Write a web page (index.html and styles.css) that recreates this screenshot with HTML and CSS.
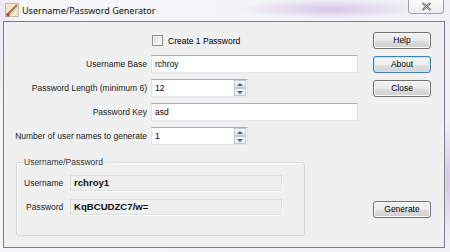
FILE: index.html
```html
<!DOCTYPE html>
<html lang="en">
<head>
    <meta charset="UTF-8">
    <title>Username/Password Generator</title>
    <link rel="stylesheet" href="styles.css">
</head>
<body>

<div class="window">
    <div class="titlebar">
        <svg class="app-icon" width="14" height="14" viewBox="0 0 14 14">
            <rect x="0.5" y="0.5" width="13" height="13" fill="#efe6d2" stroke="#c9b89a"/>
            <path d="M2 12 L12 2" stroke="#9c7a4e" stroke-width="2.2"/>
            <path d="M4.5 12.5 L12.5 4.5" stroke="#d8c7a6" stroke-width="1"/>
            <rect x="1.5" y="10.5" width="3" height="3" fill="#d0342c"/>
        </svg>
        <span class="title">Username/Password Generator</span>
        <div class="close-btn">
            <svg width="11" height="9" viewBox="0 0 11 9">
                <path d="M1.5 1 L9.5 8 M9.5 1 L1.5 8" stroke="#5a5a5a" stroke-width="2.2"/>
                <path d="M1.5 1 L9.5 8 M9.5 1 L1.5 8" stroke="#e8e8e8" stroke-width="0.8"/>
            </svg>
        </div>
    </div>

    <div class="client">
        <div class="form-col">
            <div class="check-row">
                <span class="checkbox"></span>
                <span>Create 1 Password</span>
            </div>

            <div class="fields">
                <label>Username Base</label>
                <div class="textbox">rchroy</div>

                <label>Password Length (minimum 6)</label>
                <div class="numeric">
                    <span class="num-value">12</span>
                    <span class="spin"><span class="up"></span><span class="down"></span></span>
                </div>

                <label>Password Key</label>
                <div class="textbox">asd</div>

                <label>Number of user names to generate</label>
                <div class="numeric">
                    <span class="num-value">1</span>
                    <span class="spin"><span class="up"></span><span class="down"></span></span>
                </div>
            </div>

            <fieldset class="group">
                <legend>Username/Password</legend>
                <div class="result-row">
                    <span class="result-label">Username</span>
                    <div class="result-box">rchroy1</div>
                </div>
                <div class="result-row">
                    <span class="result-label pw">Password</span>
                    <div class="result-box">KqBCUDZC7/w=</div>
                </div>
            </fieldset>
        </div>

        <div class="button-col">
            <div class="button">Help</div>
            <div class="button default">About</div>
            <div class="button">Close</div>
            <div class="button generate">Generate</div>
        </div>
    </div>
</div>

</body>
</html>
```

FILE: styles.css
```css
* {
    box-sizing: border-box;
}

body {
    margin: 0;
    font-family: "Liberation Sans", Arial, sans-serif;
    font-size: 8.5px;
    color: #000;
}

/* aero glass frame, with the blurred window behind it */
.window {
    width: 450px;
    height: 252px;
    overflow: hidden;
    background:
        radial-gradient(ellipse 90px 10px at 330px 9px, rgba(196, 160, 222, 0.55), transparent),
        radial-gradient(ellipse 6px 60px at 448px 180px, rgba(190, 150, 215, 0.5), transparent),
        linear-gradient(100deg, #ece6f2 0%, #f6f6f8 5%, #f3f4f7 50%, #eef1f6 100%);
}

.titlebar {
    height: 21px;
    display: flex;
    align-items: flex-start;
}

.app-icon {
    margin: 3px 0 0 5px;
}

.title {
    margin: 4px 0 0 3px;
    font-family: "Noto Sans", sans-serif;
    font-size: 9px;
    color: #111;
}

.close-btn {
    margin-left: auto;
    margin-right: 6px;
    width: 36px;
    height: 14px;
    border: 1px solid #9ea4ad;
    border-top: none;
    border-radius: 0 0 4px 4px;
    background: linear-gradient(#fbfbfb, #eceef1);
    display: flex;
    justify-content: center;
    align-items: center;
}

.client {
    margin-left: 3px;
    width: 442px;
    height: 227px;
    border: 1px solid #7a7f86;
    background: #f0f0f0;
    display: flex;
    padding: 10px 13px 11px 0;
}

.form-col {
    width: 354px;
    display: flex;
    flex-direction: column;
}

.check-row {
    height: 17px;
    display: flex;
    align-items: center;
    padding-left: 148px;
}

.checkbox {
    width: 11px;
    height: 11px;
    margin-right: 5px;
    border: 1px solid #8e8f8f;
    background: linear-gradient(135deg, #dcdcdc, #fbfbfb);
    box-shadow: inset 0 0 0 1px #f4f4f4;
}

.fields {
    margin-top: 6px;
    display: grid;
    grid-template-columns: 143px 207px;
    grid-auto-rows: 18px;
    column-gap: 4px;
    row-gap: 6px;
    align-items: center;
}

.fields label {
    text-align: right;
    color: #222;
    white-space: nowrap;
}

.textbox,
.numeric {
    height: 18px;
    background: #fff;
    border: 1px solid;
    border-color: #abadb3 #dbdfe6 #e3e9ef #e2e3ea;
    padding: 0 3px;
    line-height: 16px;
}

.numeric {
    width: 97px;
    display: flex;
    padding: 0 0 0 3px;
    align-items: center;
}

.num-value {
    flex: 1;
}

.spin {
    width: 12px;
    height: 16px;
    display: flex;
    flex-direction: column;
    margin-right: 1px;
}

.spin span {
    flex: 1;
    border: 1px solid #c4c8cf;
    background: linear-gradient(#f8f8f8, #e6e8ec);
    display: flex;
    justify-content: center;
    align-items: center;
}

.spin .up::after {
    content: "";
    border-left: 3px solid transparent;
    border-right: 3px solid transparent;
    border-bottom: 3px solid #4a5e88;
}

.spin .down::after {
    content: "";
    border-left: 3px solid transparent;
    border-right: 3px solid transparent;
    border-top: 3px solid #4a5e88;
}

.group {
    margin: 12px 0 0 12px;
    width: 289px;
    height: 79px;
    border: 1px solid #d5d8dc;
    border-radius: 3px;
    padding: 8px 0 0 7px;
    box-shadow: 1px 1px 0 #fff inset;
}

.group legend {
    padding: 0 1px;
    margin-left: -1px;
    color: #333;
}

.result-row {
    display: flex;
    align-items: center;
    height: 16px;
    margin-bottom: 8px;
}

.result-label {
    width: 46px;
    color: #222;
}

.result-label.pw {
    padding-left: 2px;
}

.result-box {
    width: 212px;
    height: 16px;
    border: 1px solid #dcdfe3;
    box-shadow: 1px 1px 0 #fff;
    padding: 0 3px;
    font-size: 9.6px;
    font-weight: bold;
    line-height: 14px;
    color: #111;
}

.button-col {
    margin-left: auto;
    width: 58px;
    display: flex;
    flex-direction: column;
    gap: 7px;
}

.button {
    height: 17px;
    border: 1px solid #707070;
    border-radius: 3px;
    background: linear-gradient(#f2f2f2 0%, #ebebeb 50%, #dddddd 51%, #cfcfcf 100%);
    box-shadow: inset 0 0 0 1px #fbfbfb;
    text-align: center;
    line-height: 15px;
}

.button.default {
    border-color: #3c7fb1;
    box-shadow: inset 0 0 0 1px #bfe7f8;
    background: linear-gradient(#f5f5f5 0%, #eeeeee 50%, #e0e0e0 51%, #d5d5d5 100%);
}

.button.generate {
    margin-top: auto;
    margin-bottom: 18px;
}
```
